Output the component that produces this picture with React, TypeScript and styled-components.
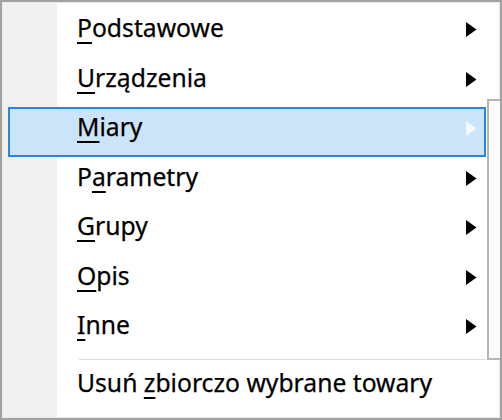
import React from "react";
import styled, { createGlobalStyle } from "styled-components";

const GlobalStyle = createGlobalStyle`
  html, body {
    margin: 0;
    padding: 0;
    background: #ffffff;
    overflow: hidden;
  }
  body {
    font-family: "Noto Sans", "Open Sans", "Liberation Sans", sans-serif;
  }
`;

const Menu = styled.div`
  position: relative;
  box-sizing: border-box;
  width: 502px;
  height: 420px;
  border: 2px solid #a2a2a2;
  box-shadow: inset 0 0 0 1px #e9e9e9;
  background: linear-gradient(to right, #f0f0f0 0, #f0f0f0 55px, #ffffff 55px);
  padding: 6px 14px 0 6px;
  display: flex;
  flex-direction: column;
`;

const Item = styled.div<{ $active?: boolean }>`
  box-sizing: border-box;
  height: 49.5px;
  flex: none;
  display: flex;
  align-items: center;
  padding: 0 7px 0 67px;
  border: 2px solid ${(p) => (p.$active ? "#2a86dc" : "transparent")};
  background: ${(p) => (p.$active ? "#cce4f7" : "transparent")};
  color: #000000;
  font-size: 24.7px;
  white-space: nowrap;
`;

const Label = styled.span`
  flex: 1;
  margin-bottom: 8px;
  line-height: 1;
  -webkit-text-stroke: 0.25px #000;
  u {
    text-decoration-thickness: 2px;
    text-underline-offset: 5px;
  }
`;

const Arrow = styled.svg<{ $active?: boolean }>`
  flex: none;
  width: 11px;
  height: 15px;
  margin-bottom: 6px;
  fill: ${(p) => (p.$active ? "#f4f9fe" : "#000000")};
`;

const Separator = styled.div`
  flex: none;
  height: 1px;
  margin: 4.5px 0 3px 71px;
  background: #dcdcdc;
`;

const Behind = styled.div`
  position: absolute;
  left: 485px;
  top: 97px;
  width: 13px;
  height: 261px;
  box-sizing: border-box;
  border: 2px solid #b4b4b4;
  border-right: none;
  background: #fbfbfb;
`;

type Entry = { pre: string; key: string; post: string; sub?: boolean; active?: boolean };

const entries: Entry[] = [
  { pre: "", key: "P", post: "odstawowe", sub: true },
  { pre: "", key: "U", post: "rządzenia", sub: true },
  { pre: "", key: "M", post: "iary", sub: true, active: true },
  { pre: "P", key: "a", post: "rametry", sub: true },
  { pre: "", key: "G", post: "rupy", sub: true },
  { pre: "", key: "O", post: "pis", sub: true },
  { pre: "", key: "I", post: "nne", sub: true },
];

const ArrowIcon = ({ active }: { active?: boolean }) => (
  <Arrow $active={active} viewBox="0 0 11 15">
    <polygon points="0,0 10.5,7.5 0,15" />
  </Arrow>
);

export default function App() {
  return (
    <>
      <GlobalStyle />
      <Menu>
        {entries.map((e) => (
          <Item key={e.key + e.post} $active={e.active}>
            <Label>
              {e.pre}
              <u>{e.key}</u>
              {e.post}
            </Label>
            {e.sub && <ArrowIcon active={e.active} />}
          </Item>
        ))}
        <Separator />
        <Item>
          <Label>
            Usuń <u>z</u>biorczo wybrane towary
          </Label>
        </Item>
        <Behind />
      </Menu>
    </>
  );
}
